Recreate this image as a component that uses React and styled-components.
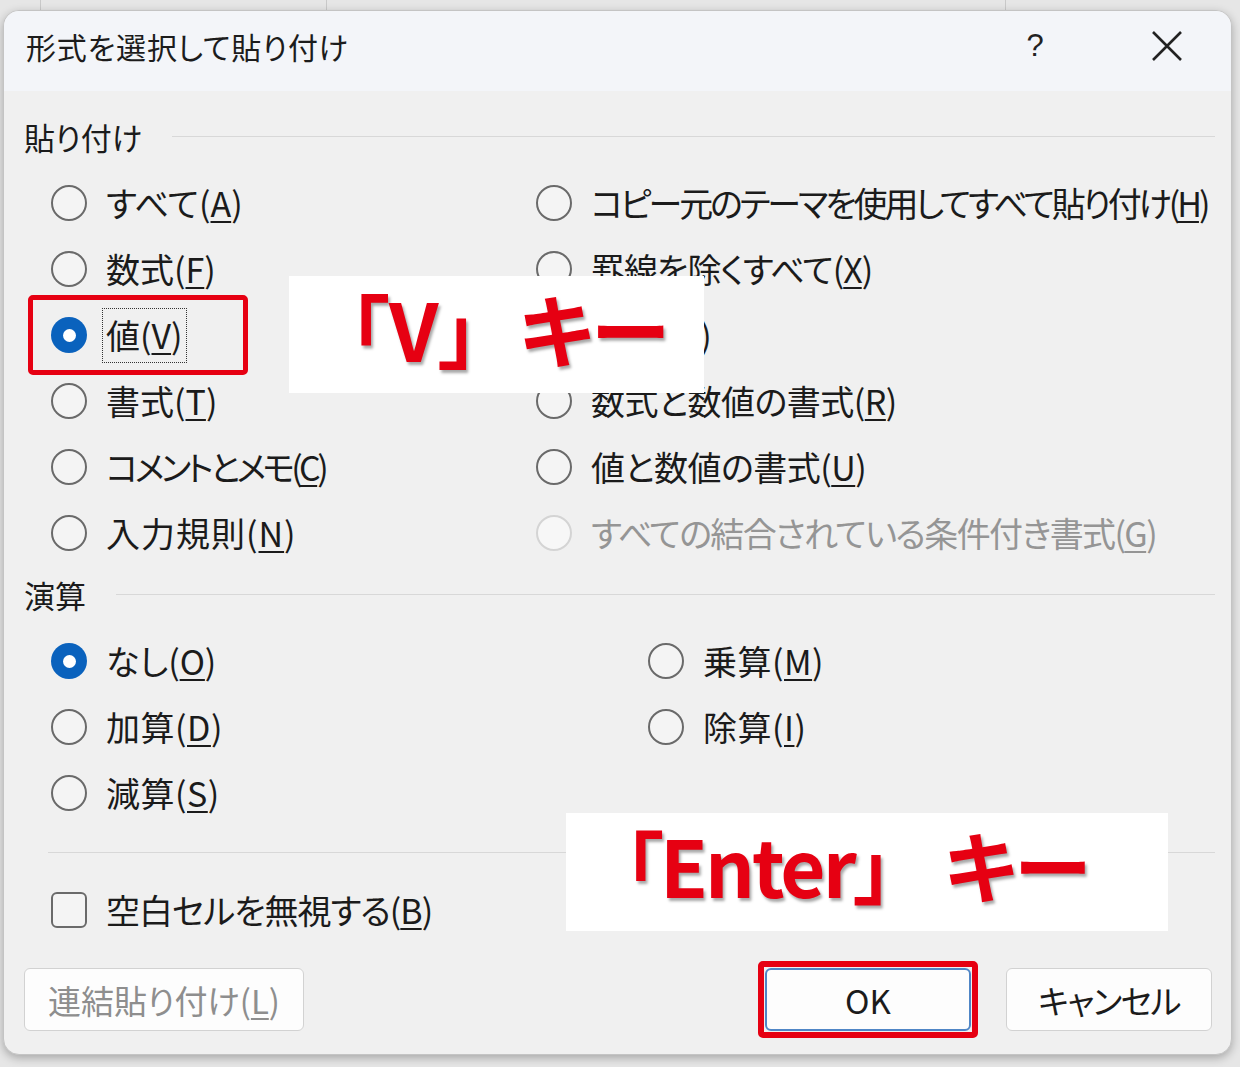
import React from "react";
import styled, { createGlobalStyle } from "styled-components";

const Global = createGlobalStyle`
  html, body { margin: 0; padding: 0; }
  body {
    background: #e3e3e3;
    font-family: "Noto Sans CJK JP", "Noto Sans", sans-serif;
    color: #1b1b1b;
  }
`;

const Page = styled.div`
  width: 1240px;
  height: 1067px;
  box-sizing: border-box;
  padding: 10px 8px 0 3px;
  overflow: hidden;
  background:
    linear-gradient(#c9c9c9, #c9c9c9) 40px 0 / 1px 10px no-repeat,
    linear-gradient(#c9c9c9, #c9c9c9) 326px 0 / 1px 10px no-repeat,
    linear-gradient(#c9c9c9, #c9c9c9) 1005px 0 / 1px 10px no-repeat,
    #e6e6e6;
`;

const Dialog = styled.div`
  position: relative;
  width: 1229px;
  height: 1045px;
  box-sizing: border-box;
  border-radius: 16px;
  background: #f0f0f0;
  border: 1px solid #c4c4c4;
  box-shadow: 0 3px 10px rgba(0, 0, 0, 0.28);
  display: flex;
  flex-direction: column;
  overflow: hidden;
  font-feature-settings: "palt";
`;

const TitleBar = styled.div`
  height: 80px;
  flex: none;
  box-sizing: border-box;
  display: flex;
  align-items: center;
  padding: 0 24px 10px 22px;
  background: #f3f5f9;
`;

const Title = styled.div`
  flex: 1;
  font-size: 30px;
  color: #1c1c1c;
  letter-spacing: 0.8px;
`;

const TitleButton = styled.div`
  width: ${(p) => p.$w}px;
  height: 60px;
  display: flex;
  align-items: center;
  justify-content: center;
  font-size: 31px;
  color: #222;
  font-family: "Liberation Sans", sans-serif;
`;

const Body = styled.div`
  flex: 1;
  display: flex;
  flex-direction: column;
  padding: 0 16px 24px 20px;
`;

const SectionHeader = styled.div`
  display: flex;
  align-items: center;
  height: 38px;
  margin-top: ${(p) => p.$mt}px;
  font-size: 31px;
`;

const SectionLine = styled.div`
  flex: 1;
  height: 1px;
  background: #d8d8d8;
  margin-left: ${(p) => p.$gap}px;
`;

const OptionGrid = styled.div`
  display: grid;
  grid-template-columns: ${(p) => p.$col}px 1fr;
  grid-template-rows: repeat(${(p) => p.$rows}, 66px);
  grid-auto-flow: column;
  margin-top: 15px;
  padding-left: 27px;
`;

const Option = styled.div`
  position: relative;
  display: flex;
  align-items: center;
  gap: 19px;
  font-size: 34px;
  white-space: nowrap;
  color: ${(p) => (p.$disabled ? "#959595" : "#1b1b1b")};
`;

const Radio = styled.span`
  flex: none;
  width: 36px;
  height: 36px;
  box-sizing: border-box;
  border-radius: 50%;
  display: flex;
  align-items: center;
  justify-content: center;
  border: ${(p) =>
    p.$checked ? "none" : p.$disabled ? "2px solid #d4d4d4" : "2px solid #6a6a6a"};
  background: ${(p) => (p.$checked ? "#0a62bd" : p.$disabled ? "#f7f7f7" : "#f4f4f4")};
  &::after {
    content: "";
    display: ${(p) => (p.$checked ? "block" : "none")};
    width: 13px;
    height: 13px;
    border-radius: 50%;
    background: #fff;
  }
`;

const Label = styled.span`
  line-height: 1;
  letter-spacing: ${(p) => p.$ls || 0}px;
  ${(p) =>
    p.$focus &&
    `
    margin-left: -4px;
    padding: 9px 3px 10px 3px;
    border: 1px dotted #333;
  `}
  u {
    text-decoration-thickness: 2px;
    text-underline-offset: 4px;
  }
`;

const Highlight = styled.span`
  position: absolute;
  left: -23px;
  top: -7px;
  width: 220px;
  height: 80px;
  box-sizing: border-box;
  border: 5px solid #e60012;
  border-radius: 5px;
  pointer-events: none;
`;

const Separator = styled.div`
  height: 1px;
  background: #d8d8d8;
  margin: 26px 0 0 24px;
`;

const CheckRow = styled.div`
  height: 66px;
  margin-top: 24px;
  padding-left: 27px;
  display: flex;
  align-items: center;
  gap: 19px;
  font-size: 34px;
`;

const CheckBox = styled.span`
  width: 36px;
  height: 36px;
  box-sizing: border-box;
  border: 2px solid #6a6a6a;
  border-radius: 6px;
  background: #f4f4f4;
`;

const ButtonRow = styled.div`
  margin-top: 25px;
  height: 63px;
  display: flex;
  align-items: center;
  gap: 35px;
  padding-right: 3px;
`;

const Button = styled.div`
  position: relative;
  width: ${(p) => p.$w}px;
  height: 63px;
  box-sizing: border-box;
  display: flex;
  align-items: center;
  justify-content: center;
  border-radius: 6px;
  background: #fdfdfd;
  border: ${(p) => (p.$default ? "2px solid #4f86c6" : "1px solid #d2d2d2")};
  font-size: 33px;
  letter-spacing: ${(p) => p.$ls || 0}px;
  color: ${(p) => (p.$disabled ? "#8e8e8e" : "#1b1b1b")};
  margin-right: ${(p) => (p.$push ? "auto" : "0")};
  u {
    text-decoration-thickness: 2px;
    text-underline-offset: 4px;
  }
`;

const ButtonHighlight = styled.span`
  position: absolute;
  inset: -9px -9px -9px -9px;
  border: 6px solid #e60012;
  border-radius: 5px;
  pointer-events: none;
`;

const Callout = styled.div`
  position: absolute;
  left: ${(p) => p.$x}px;
  top: ${(p) => p.$y}px;
  width: ${(p) => p.$w}px;
  height: ${(p) => p.$h}px;
  background: #fff;
  display: flex;
  align-items: center;
  padding-left: ${(p) => p.$pl}px;
  padding-bottom: ${(p) => p.$pb}px;
  box-sizing: border-box;
  color: #e60012;
  font-weight: 700;
  font-size: ${(p) => p.$fs}px;
  letter-spacing: ${(p) => p.$ls || 0}px;
  line-height: 1;
  white-space: nowrap;
  text-shadow: 2px 3px 3px rgba(0, 0, 0, 0.35);
  font-feature-settings: "palt";
`;

const CalloutKey = styled.span`
  margin-left: ${(p) => p.$gap}px;
  letter-spacing: 0;
`;

const CloseIcon = () => (
  <svg width="32" height="32" viewBox="0 0 32 32">
    <path d="M2 2 L30 30 M30 2 L2 30" stroke="#222" strokeWidth="2.6" fill="none" />
  </svg>
);

const pasteOptions = [
  { label: "すべて", key: "A" },
  { label: "数式", key: "F" },
  { label: "値", key: "V", checked: true, focus: true, highlight: true },
  { label: "書式", key: "T" },
  { label: "コメントとメモ", key: "C", ls: -3.6 },
  { label: "入力規則", key: "N", ls: 1 },
  { label: "コピー元のテーマを使用してすべて貼り付け", key: "H", ls: -3.1 },
  { label: "罫線を除くすべて", key: "X", ls: -1 },
  { label: "列幅", key: "W" },
  { label: "数式と数値の書式", key: "R", ls: -0.5 },
  { label: "値と数値の書式", key: "U", ls: -0.5 },
  { label: "すべての結合されている条件付き書式", key: "G", disabled: true, ls: -1.6 },
];

const opOptions = [
  { label: "なし", key: "O", checked: true },
  { label: "加算", key: "D", ls: 0.5 },
  { label: "減算", key: "S", ls: 0.5 },
  { label: "乗算", key: "M", ls: 0.5 },
  { label: "除算", key: "I", ls: 0.5 },
];

const OptionItem = ({ o }) => (
  <Option $disabled={o.disabled}>
    {o.highlight && <Highlight />}
    <Radio $checked={o.checked} $disabled={o.disabled} />
    <Label $focus={o.focus} $ls={o.ls}>
      {o.label}(<u>{o.key}</u>)
    </Label>
  </Option>
);

export default function App() {
  return (
    <Page>
      <Global />
      <Dialog>
        <TitleBar>
          <Title>形式を選択して貼り付け</Title>
          <TitleButton $w={80}>?</TitleButton>
          <TitleButton $w={52} />
          <TitleButton $w={80}>
            <CloseIcon />
          </TitleButton>
        </TitleBar>
        <Body>
          <SectionHeader $mt={26}>
            貼り付け
            <SectionLine $gap={30} />
          </SectionHeader>
          <OptionGrid $col={485} $rows={6}>
            {pasteOptions.map((o) => (
              <OptionItem key={o.key} o={o} />
            ))}
          </OptionGrid>
          <SectionHeader $mt={9}>
            演算
            <SectionLine $gap={30} />
          </SectionHeader>
          <OptionGrid $col={597} $rows={3}>
            {opOptions.map((o) => (
              <OptionItem key={o.key} o={o} />
            ))}
          </OptionGrid>
          <Separator />
          <CheckRow>
            <CheckBox />
            <Label $ls={-1}>
              空白セルを無視する(<u>B</u>)
            </Label>
          </CheckRow>
          <ButtonRow>
            <Button $w={280} $disabled $push>
              <span>
                連結貼り付け(<u>L</u>)
              </span>
            </Button>
            <Button $w={206} $default>
              OK
              <ButtonHighlight />
            </Button>
            <Button $w={206} $ls={-1.5}>
              キャンセル
            </Button>
          </ButtonRow>
        </Body>
        <Callout $x={285} $y={265} $w={415} $h={117} $pl={60} $pb={16} $fs={80}>
          「V」<CalloutKey $gap={40}>キー</CalloutKey>
        </Callout>
        <Callout $x={562} $y={802} $w={602} $h={118} $pl={58} $pb={16} $fs={78} $ls={-3}>
          「Enter」<CalloutKey $gap={54}>キー</CalloutKey>
        </Callout>
      </Dialog>
    </Page>
  );
}
